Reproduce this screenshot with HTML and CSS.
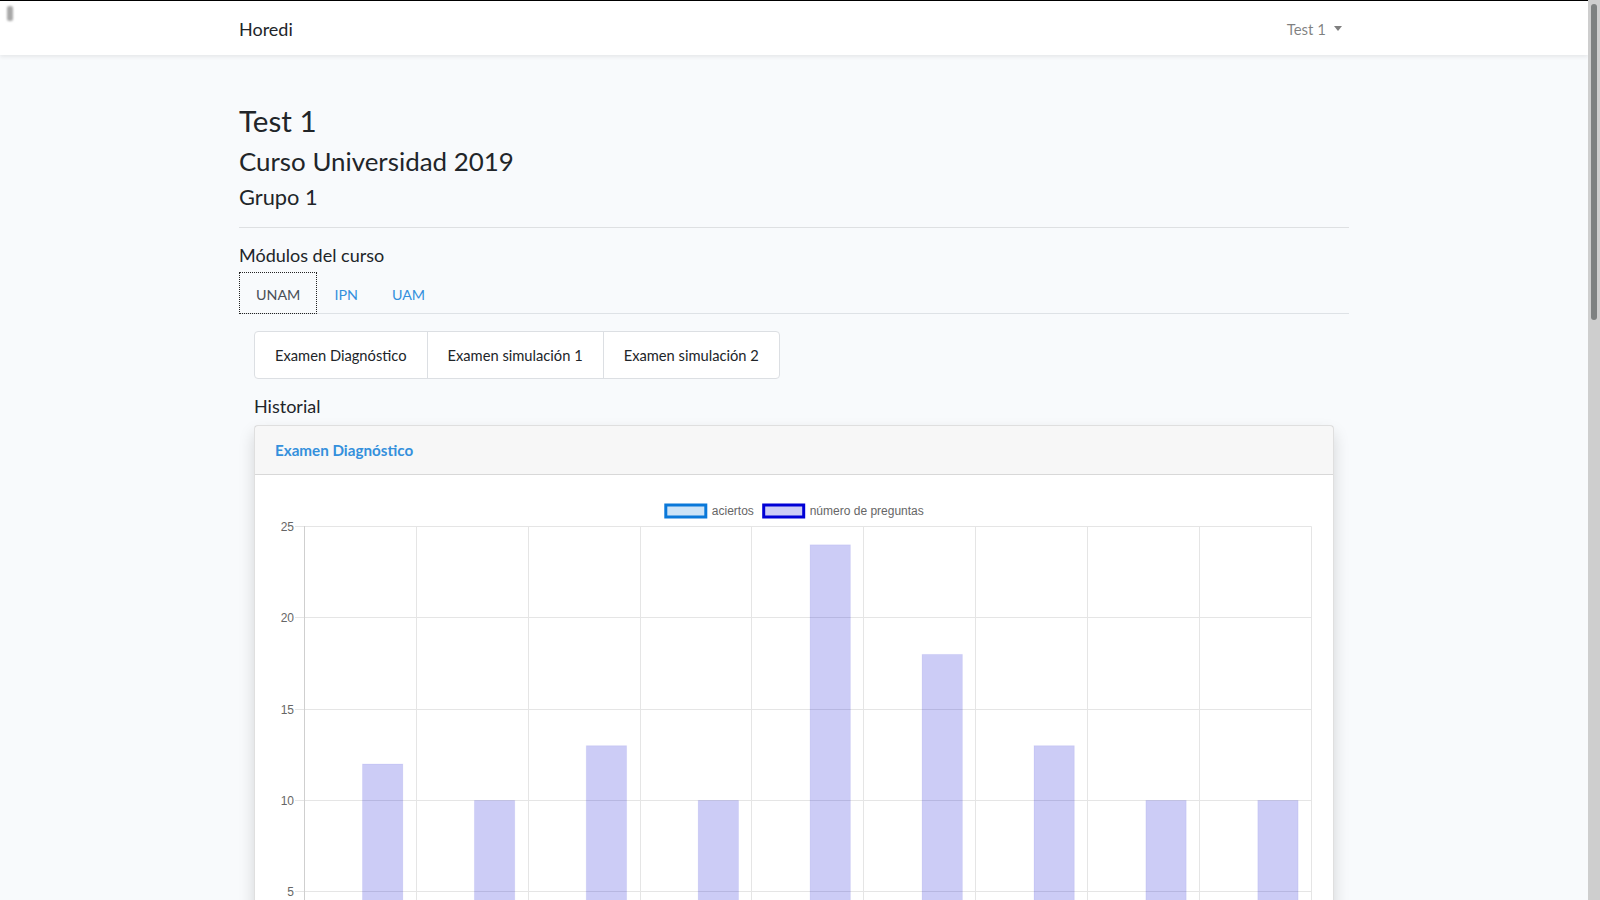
FILE: index.html
```html
<!DOCTYPE html>
<html lang="es">
<head>
<meta charset="utf-8">
<title>Horedi</title>
<link rel="stylesheet" href="styles.css">
</head>
<body>
<div class="viewport">
  <div class="page">
    <div class="blip"></div>
    <nav class="navbar">
      <div class="container nav-inner">
        <a class="brand">Horedi</a>
        <a class="user-toggle">Test 1<span class="caret"></span></a>
      </div>
    </nav>
    <main class="container main">
      <h1 class="title">Test 1</h1>
      <h2 class="course">Curso Universidad 2019</h2>
      <h3 class="group">Grupo 1</h3>
      <hr class="divider">
      <h4 class="section">Módulos del curso</h4>
      <ul class="tabs">
        <li><a class="tab active">UNAM</a></li>
        <li><a class="tab">IPN</a></li>
        <li><a class="tab">UAM</a></li>
      </ul>
      <div class="tab-pane">
        <div class="btn-group">
          <button class="btn">Examen Diagnóstico</button>
          <button class="btn">Examen simulación 1</button>
          <button class="btn">Examen simulación 2</button>
        </div>
        <h5 class="history">Historial</h5>
        <div class="card">
          <div class="card-header">Examen Diagnóstico</div>
          <div class="card-body">
            <svg class="chart" width="1037" height="500" xmlns="http://www.w3.org/2000/svg" font-family="'Liberation Sans', Arial, sans-serif" font-size="12">
              <!-- legend -->
              <rect x="390.8" y="10" width="40" height="12" fill="#cce3f7" stroke="#0a78d9" stroke-width="3"/>
              <text x="436.8" y="20.3" fill="#666">aciertos</text>
              <rect x="488.7" y="10" width="40" height="12" fill="#ccccf6" stroke="#0000d6" stroke-width="3"/>
              <text x="534.7" y="20.3" fill="#666">número de preguntas</text>
              <!-- horizontal grid -->
              <g stroke="#e5e5e5" stroke-width="1">
                <line x1="20" y1="31.5" x2="1036.5" y2="31.5"/>
                <line x1="20" y1="122.5" x2="1036.5" y2="122.5"/>
                <line x1="20" y1="214.5" x2="1036.5" y2="214.5"/>
                <line x1="20" y1="305.5" x2="1036.5" y2="305.5"/>
                <line x1="20" y1="396.5" x2="1036.5" y2="396.5"/>
                <line x1="20" y1="488.5" x2="1036.5" y2="488.5"/>
              </g>
              <!-- vertical grid -->
              <g stroke="#e5e5e5" stroke-width="1">
                <line x1="141.5" y1="31.5" x2="141.5" y2="498"/>
                <line x1="253.5" y1="31.5" x2="253.5" y2="498"/>
                <line x1="365.5" y1="31.5" x2="365.5" y2="498"/>
                <line x1="476.5" y1="31.5" x2="476.5" y2="498"/>
                <line x1="588.5" y1="31.5" x2="588.5" y2="498"/>
                <line x1="700.5" y1="31.5" x2="700.5" y2="498"/>
                <line x1="812.5" y1="31.5" x2="812.5" y2="498"/>
                <line x1="924.5" y1="31.5" x2="924.5" y2="498"/>
                <line x1="1036.5" y1="31.5" x2="1036.5" y2="498"/>
              </g>
              <line x1="29.5" y1="31" x2="29.5" y2="498" stroke="#cfcfcf" stroke-width="1"/>
              <!-- y tick labels -->
              <g fill="#666" text-anchor="end">
                <text x="19" y="35.8">25</text>
                <text x="19" y="126.8">20</text>
                <text x="19" y="218.8">15</text>
                <text x="19" y="309.8">10</text>
                <text x="19" y="400.8">5</text>
                <text x="19" y="492.8">0</text>
              </g>
              <!-- bars -->
              <g fill="rgba(0,0,210,0.2)" stroke="rgba(0,0,210,0.06)" stroke-width="1">
                <rect x="87.5" y="269" width="40.3" height="219.3"/>
                <rect x="199.4" y="305.5" width="40.3" height="182.8"/>
                <rect x="311.3" y="250.7" width="40.3" height="237.6"/>
                <rect x="423.2" y="305.5" width="40.3" height="182.8"/>
                <rect x="535.1" y="49.8" width="40.3" height="438.5"/>
                <rect x="647.1" y="159.4" width="40.3" height="328.9"/>
                <rect x="759" y="250.7" width="40.3" height="237.6"/>
                <rect x="870.9" y="305.5" width="40.3" height="182.8"/>
                <rect x="982.8" y="305.5" width="40.3" height="182.8"/>
              </g>
            </svg>
          </div>
        </div>
      </div>
    </main>
  </div>
  <div class="scrollbar"><div class="thumb"></div></div>
</div>
</body>
</html>
```

FILE: styles.css
```css
* { box-sizing: border-box; }

html, body {
  margin: 0;
  padding: 0;
  height: 100%;
  overflow: hidden;
}

body {
  font-family: Lato, "Noto Sans", sans-serif;
  font-size: 15px;
  line-height: 24px;
  color: #212529;
  background: #f8fafc;
}

.viewport {
  display: flex;
  height: 900px;
}

.page {
  flex: 1;
  position: relative;
  overflow: hidden;
}

.blip {
  position: absolute;
  left: 7px;
  top: 6px;
  width: 6px;
  height: 15px;
  background: #a8a8a8;
  border-radius: 2px;
  filter: blur(1.3px);
  z-index: 5;
}

.scrollbar {
  width: 12px;
  background: #cecece;
  padding: 4px 3px;
}

.thumb {
  width: 6px;
  height: 316px;
  background: #7e8181;
  border-radius: 3px;
}

.container {
  width: 1140px;
  margin: 0 auto;
  padding: 0 15px;
}

/* navbar */
.navbar {
  height: 55px;
  background: #fff;
  border-top: 1px solid #000;
  box-shadow: 0 2px 4px rgba(0, 0, 0, 0.075);
  position: relative;
  z-index: 2;
}

.nav-inner {
  height: 100%;
  padding-top: 2px;
  display: flex;
  align-items: center;
  justify-content: space-between;
}

.brand {
  font-size: 18px;
  line-height: 28px;
  color: #212529;
}

.user-toggle {
  font-size: 15px;
  line-height: 24px;
  color: rgba(0, 0, 0, 0.5);
  padding-right: 7px;
  display: flex;
  align-items: center;
}

.caret {
  display: inline-block;
  margin-left: 8px;
  border-top: 5px solid rgba(0, 0, 0, 0.5);
  border-left: 4.5px solid transparent;
  border-right: 4.5px solid transparent;
  margin-top: -2px;
}

/* main */
.main {
  padding-top: 48px;
}

.title, .course, .group, .section, .history {
  margin: 0;
  font-weight: 400;
  color: #212529;
}

.title {
  font-size: 29.6px;
  line-height: 35px;
}

.course {
  margin-top: 7.6px;
  font-size: 25.9px;
  line-height: 30px;
}

.group {
  margin-top: 8px;
  font-size: 21.8px;
  line-height: 26px;
}

.divider {
  margin: 17px 0 0;
  border: 0;
  border-top: 1px solid rgba(0, 0, 0, 0.1);
  height: 0;
}

.section {
  margin-top: 17.7px;
  font-size: 18px;
  line-height: 21.6px;
}

.tabs {
  list-style: none;
  margin: 5.5px 0 0;
  padding: 0;
  display: flex;
  border-bottom: 1px solid #dee2e6;
}

.tab {
  display: block;
  padding: 9.5px 16px 6.5px;
  border: 1px solid transparent;
  margin-bottom: -1px;
  color: #3490dc;
  font-size: 14.3px;
  line-height: 24px;
}

.tab.active {
  color: #495057;
  border: 1px dotted #222;
}

.tab-pane {
  padding: 0 15px;
}

.btn-group {
  margin-top: 16.7px;
  display: inline-flex;
  background: #fff;
  border: 1px solid #dcdfe3;
  border-radius: 4px;
}

.btn {
  font-family: inherit;
  font-size: 14.7px;
  line-height: 24px;
  color: #212529;
  background: transparent;
  border: 0;
  padding: 11px 20px;
}

.btn + .btn {
  border-left: 1px solid #dcdfe3;
}

.history {
  margin-top: 17.2px;
  font-size: 18px;
  line-height: 21.6px;
}

.card {
  margin-top: 7.5px;
  background: #fff;
  border: 1px solid rgba(0, 0, 0, 0.125);
  border-radius: 4px;
  box-shadow: 0 8px 16px rgba(0, 0, 0, 0.15);
}

.card-header {
  padding: 12px 20px;
  background: rgba(0, 0, 0, 0.03);
  border-bottom: 1px solid rgba(0, 0, 0, 0.125);
  color: #3490dc;
  font-weight: 700;
  font-size: 15.2px;
  line-height: 24px;
}

.card-body {
  padding: 20px;
}

.chart {
  display: block;
}
```
